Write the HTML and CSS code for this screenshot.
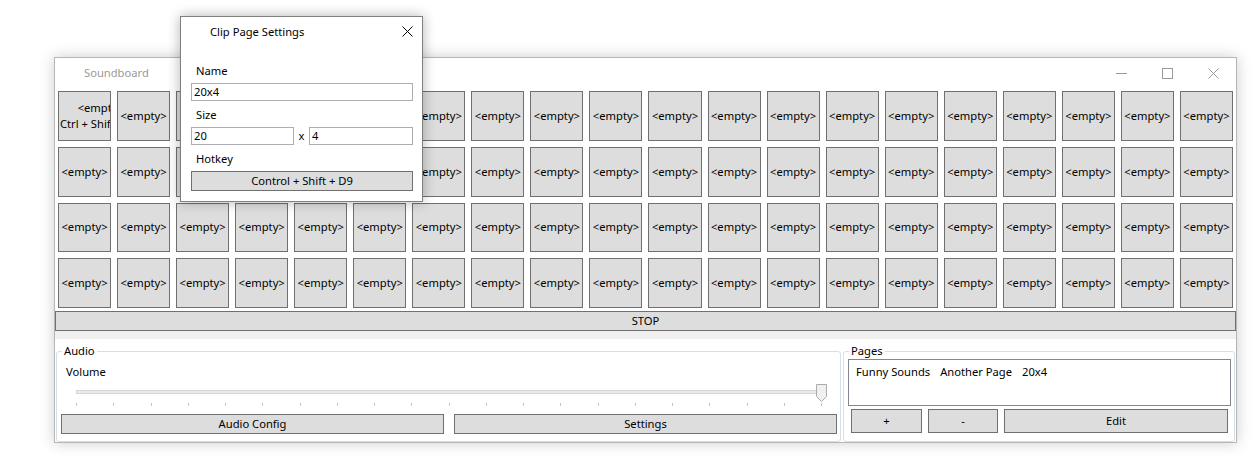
FILE: index.html
```html
<!DOCTYPE html>
<html>
<head>
<meta charset="utf-8">
<link rel="stylesheet" href="styles.css">
</head>
<body>
<div class="window">
  <div class="titlebar">
    <span class="title">Soundboard</span>
    <div class="controls">
      <span class="ctl"><svg width="11" height="11" viewBox="0 0 11 11"><line x1="0" y1="5.5" x2="11" y2="5.5"/></svg></span>
      <span class="ctl"><svg width="11" height="11" viewBox="0 0 11 11"><rect x="0.5" y="0.5" width="10" height="10"/></svg></span>
      <span class="ctl"><svg width="11" height="11" viewBox="0 0 11 11"><line x1="0.5" y1="0.5" x2="10.5" y2="10.5"/><line x1="10.5" y1="0.5" x2="0.5" y2="10.5"/></svg></span>
    </div>
  </div>
  <div class="grid">
    <button class="btn clip hot"><span class="hot-text">&lt;empty&gt;<br>Ctrl + Shift + D1</span></button>
    <button class="btn clip">&lt;empty&gt;</button><button class="btn clip">&lt;empty&gt;</button><button class="btn clip">&lt;empty&gt;</button><button class="btn clip">&lt;empty&gt;</button><button class="btn clip">&lt;empty&gt;</button><button class="btn clip">&lt;empty&gt;</button><button class="btn clip">&lt;empty&gt;</button><button class="btn clip">&lt;empty&gt;</button><button class="btn clip">&lt;empty&gt;</button><button class="btn clip">&lt;empty&gt;</button><button class="btn clip">&lt;empty&gt;</button><button class="btn clip">&lt;empty&gt;</button><button class="btn clip">&lt;empty&gt;</button><button class="btn clip">&lt;empty&gt;</button><button class="btn clip">&lt;empty&gt;</button><button class="btn clip">&lt;empty&gt;</button><button class="btn clip">&lt;empty&gt;</button><button class="btn clip">&lt;empty&gt;</button><button class="btn clip">&lt;empty&gt;</button>
    <button class="btn clip">&lt;empty&gt;</button><button class="btn clip">&lt;empty&gt;</button><button class="btn clip">&lt;empty&gt;</button><button class="btn clip">&lt;empty&gt;</button><button class="btn clip">&lt;empty&gt;</button><button class="btn clip">&lt;empty&gt;</button><button class="btn clip">&lt;empty&gt;</button><button class="btn clip">&lt;empty&gt;</button><button class="btn clip">&lt;empty&gt;</button><button class="btn clip">&lt;empty&gt;</button><button class="btn clip">&lt;empty&gt;</button><button class="btn clip">&lt;empty&gt;</button><button class="btn clip">&lt;empty&gt;</button><button class="btn clip">&lt;empty&gt;</button><button class="btn clip">&lt;empty&gt;</button><button class="btn clip">&lt;empty&gt;</button><button class="btn clip">&lt;empty&gt;</button><button class="btn clip">&lt;empty&gt;</button><button class="btn clip">&lt;empty&gt;</button><button class="btn clip">&lt;empty&gt;</button>
    <button class="btn clip">&lt;empty&gt;</button><button class="btn clip">&lt;empty&gt;</button><button class="btn clip">&lt;empty&gt;</button><button class="btn clip">&lt;empty&gt;</button><button class="btn clip">&lt;empty&gt;</button><button class="btn clip">&lt;empty&gt;</button><button class="btn clip">&lt;empty&gt;</button><button class="btn clip">&lt;empty&gt;</button><button class="btn clip">&lt;empty&gt;</button><button class="btn clip">&lt;empty&gt;</button><button class="btn clip">&lt;empty&gt;</button><button class="btn clip">&lt;empty&gt;</button><button class="btn clip">&lt;empty&gt;</button><button class="btn clip">&lt;empty&gt;</button><button class="btn clip">&lt;empty&gt;</button><button class="btn clip">&lt;empty&gt;</button><button class="btn clip">&lt;empty&gt;</button><button class="btn clip">&lt;empty&gt;</button><button class="btn clip">&lt;empty&gt;</button><button class="btn clip">&lt;empty&gt;</button>
    <button class="btn clip">&lt;empty&gt;</button><button class="btn clip">&lt;empty&gt;</button><button class="btn clip">&lt;empty&gt;</button><button class="btn clip">&lt;empty&gt;</button><button class="btn clip">&lt;empty&gt;</button><button class="btn clip">&lt;empty&gt;</button><button class="btn clip">&lt;empty&gt;</button><button class="btn clip">&lt;empty&gt;</button><button class="btn clip">&lt;empty&gt;</button><button class="btn clip">&lt;empty&gt;</button><button class="btn clip">&lt;empty&gt;</button><button class="btn clip">&lt;empty&gt;</button><button class="btn clip">&lt;empty&gt;</button><button class="btn clip">&lt;empty&gt;</button><button class="btn clip">&lt;empty&gt;</button><button class="btn clip">&lt;empty&gt;</button><button class="btn clip">&lt;empty&gt;</button><button class="btn clip">&lt;empty&gt;</button><button class="btn clip">&lt;empty&gt;</button><button class="btn clip">&lt;empty&gt;</button>
  </div>
  <button class="btn stop">STOP</button>
  <div class="bottom">
    <fieldset class="group audio">
      <legend>Audio</legend>
      <div class="label">Volume</div>
      <div class="slider">
        <div class="track"></div>
        <div class="ticks">
          <i></i><i></i><i></i><i></i><i></i><i></i><i></i><i></i><i></i><i></i><i></i><i></i><i></i><i></i><i></i><i></i><i></i><i></i><i></i><i></i><i></i>
        </div>
        <svg class="thumb" width="11" height="18" viewBox="0 0 11 18"><polygon points="0.5,0.5 10.5,0.5 10.5,12.5 5.5,17.5 0.5,12.5"/></svg>
      </div>
      <div class="audio-buttons">
        <button class="btn wide">Audio Config</button>
        <button class="btn wide">Settings</button>
      </div>
    </fieldset>
    <fieldset class="group pages">
      <legend>Pages</legend>
      <div class="list">
        <span class="item">Funny Sounds</span>
        <span class="item">Another Page</span>
        <span class="item">20x4</span>
      </div>
      <div class="page-buttons">
        <button class="btn pbtn">+</button>
        <button class="btn pbtn">-</button>
        <button class="btn pbtn">Edit</button>
      </div>
    </fieldset>
  </div>
</div>

<div class="dialog">
  <div class="dlg-title">
    <span class="dlg-caption">Clip Page Settings</span>
    <svg class="dlg-close" width="11" height="11" viewBox="0 0 11 11"><line x1="0.5" y1="0.5" x2="10.5" y2="10.5"/><line x1="10.5" y1="0.5" x2="0.5" y2="10.5"/></svg>
  </div>
  <div class="dlg-body">
    <div class="dlg-label">Name</div>
    <div class="textbox">20x4</div>
    <div class="dlg-label">Size</div>
    <div class="size-row">
      <div class="textbox tb-w">20</div>
      <span class="times">x</span>
      <div class="textbox tb-h">4</div>
    </div>
    <div class="dlg-label">Hotkey</div>
    <button class="btn hotkey">Control + Shift + D9</button>
  </div>
</div>
</body>
</html>
```

FILE: styles.css
```css
* { box-sizing: border-box; }

body {
  margin: 0;
  width: 1254px;
  height: 462px;
  overflow: hidden;
  position: relative;
  background: #fff;
  font-family: "Segoe UI", "Noto Sans", "Open Sans", sans-serif;
  font-size: 11.2px;
  line-height: 16px;
  color: #000;
}

.window {
  margin: 57px 0 0 54px;
  width: 1183px;
  height: 386px;
  border: 1px solid #b6b6b6;
  box-shadow: 0 0 14px rgba(0, 0, 0, 0.2);
  background: #fff;
  display: flex;
  flex-direction: column;
}

.titlebar {
  flex: none;
  height: 30px;
  display: flex;
  justify-content: space-between;
}

.title {
  padding: 7px 0 0 29px;
  color: #999;
}

.controls { display: flex; }

.ctl {
  width: 46px;
  height: 30px;
  display: flex;
  align-items: center;
  justify-content: center;
}

.ctl svg {
  fill: none;
  stroke: #9a9a9a;
  stroke-width: 1;
}

.grid {
  flex: none;
  height: 223px;
  padding: 3px;
  display: grid;
  grid-template-columns: repeat(20, 1fr);
  grid-template-rows: repeat(4, 1fr);
  gap: 6px;
}

.btn {
  font: inherit;
  color: #000;
  background: #dddddd;
  border: 1px solid #707070;
  border-radius: 0;
  margin: 0;
  padding: 0;
  display: flex;
  align-items: center;
  justify-content: center;
  overflow: hidden;
  white-space: nowrap;
  min-width: 0;
}

.clip { height: 100%; }

.hot {
  justify-content: flex-start;
  padding-left: 1px;
  padding-top: 1px;
}

.hot-text {
  display: block;
  text-align: center;
  flex: none;
}

.stop {
  flex: none;
  width: 100%;
  height: 20px;
}

.bottom {
  flex: 1;
  display: flex;
  gap: 2px;
  padding: 12px 1px 0;
  background: linear-gradient(#f0f0f0 0, #f0f0f0 8px, #fff 8px);
}

.group {
  margin: 0;
  border: 1px solid #d5dfe5;
  border-radius: 3px;
  min-width: 0;
}

.group legend {
  padding: 0 2px;
  margin-left: 1px;
  line-height: 16px;
}

.audio {
  flex: none;
  width: 785px;
  padding: 0 3px 6px 4px;
}

.label { padding: 5px 5px 0; }

.slider {
  position: relative;
  height: 30px;
  padding-top: 10px;
  margin: 0 10px 0 15px;
}

.track {
  margin-right: 5px;
  height: 4px;
  background: #e7eaea;
  border: 1px solid #d6d6d6;
}

.ticks {
  margin: 9px 5px 0 0;
  height: 3px;
  display: flex;
  justify-content: space-between;
}

.ticks i {
  display: block;
  width: 1px;
  height: 3px;
  background: #c4c4c4;
}

.thumb {
  position: absolute;
  right: 0;
  top: 4px;
}

.thumb polygon {
  fill: #f0f0f0;
  stroke: #acacac;
  stroke-width: 1;
}

.audio-buttons {
  margin-top: 4px;
  display: grid;
  grid-template-columns: 1fr 1fr;
  gap: 10px;
}

.wide { height: 20px; }

.pages {
  flex: 1;
  padding: 0 3px 0 4px;
}

.list {
  height: 47px;
  border: 1px solid #828790;
  padding: 3px 2px 0;
  display: flex;
  align-items: flex-start;
}

.item { padding: 1px 5px; }

.page-buttons {
  margin: 3px 3px 0;
  display: grid;
  grid-template-columns: 71px 70px 1fr;
  gap: 6px;
}

.pbtn { height: 24px; }

.dialog {
  position: absolute;
  left: 180px;
  top: 16px;
  width: 243px;
  height: 186px;
  border: 1px solid #808080;
  background: #fff;
  box-shadow: 0 0 12px rgba(0, 0, 0, 0.3);
}

.dlg-title {
  height: 40px;
  display: flex;
  justify-content: space-between;
  align-items: flex-start;
}

.dlg-caption { padding: 7px 0 0 29px; }

.dlg-close {
  margin: 9px 9px 0 0;
  fill: none;
  stroke: #000;
  stroke-width: 1;
}

.dlg-body { padding: 0 9px 10px 10px; }

.dlg-label { padding: 6px 5px 4px; }

.textbox {
  height: 18px;
  border: 1px solid #abadb3;
  padding: 0 2px;
  line-height: 16px;
}

.size-row {
  display: flex;
  align-items: center;
}

.tb-w { width: 103px; flex: none; }
.times { width: 15px; text-align: center; }
.tb-h { flex: 1; }

.hotkey {
  width: 100%;
  height: 20px;
}
```
